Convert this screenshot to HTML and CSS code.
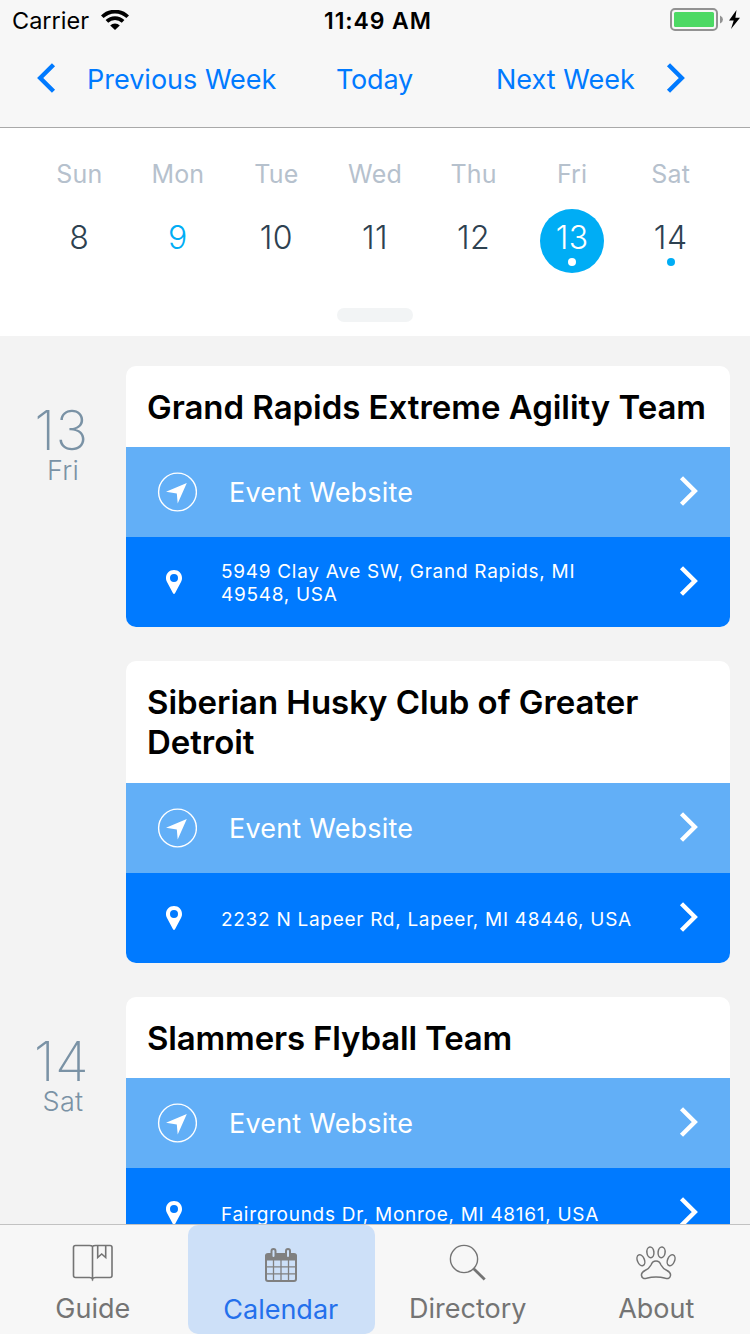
FILE: index.html
```html
<!DOCTYPE html>
<html lang="en">
<head>
<meta charset="utf-8">
<title>Calendar</title>
<link rel="stylesheet" href="styles.css">
</head>
<body>
<svg class="defs" width="0" height="0">
  <symbol id="chev" viewBox="0 0 20 32"><path d="M2.500 2.700 15.800 16 2.500 29.300" fill="none" stroke="currentColor" stroke-width="4.400"/></symbol>
  <symbol id="nav" viewBox="0 0 40 40"><circle cx="20.500" cy="20" r="18.900" fill="none" stroke="#fff" stroke-width="1.400"/><path d="M29.800 11 20.700 31.500 19.800 21.500 9 19.800Z" fill="#fff"/></symbol>
  <symbol id="pin" viewBox="0 0 16 24"><path fill-rule="evenodd" d="M8 0C3.400 0 0 3.500 0 8c0 1.700.4 2.700 1 4l6 11.200q1 1.600 2 0L15 12c.6-1.300 1-2.300 1-4 0-4.500-3.400-8-8-8Zm0 4a4 4 0 1 0 0 8 4 4 0 0 0 0-8Z" fill="#fff"/></symbol>
</svg>
<div class="screen">
  <header class="top">
    <div class="status">
      <span class="carrier">Carrier</span>
      <svg class="wifi" width="28" height="20" viewBox="0 0 28 20"><g fill="none" stroke="#000" stroke-width="3.700"><path d="M1.300 6.800A18 18 0 0 1 26.700 6.800"/><path d="M5.900 11.400A11.500 11.500 0 0 1 22.100 11.400"/></g><path d="M9.200 15.500A6.800 6.800 0 0 1 18.800 15.500L14 20Z"/></svg>
      <span class="time">11:49 AM</span>
      <svg class="battery" width="72" height="24" viewBox="0 0 72 24"><rect x="1" y="1" width="46" height="21" rx="4" fill="none" stroke="#929292" stroke-width="2"/><rect x="4" y="4" width="40" height="15" rx="1.500" fill="#4cd964"/><path d="M50 7.500q3 1.500 3 4t-3 4Z" fill="#929292"/><path d="M66.500 2 59 12.500h4.700L61 21 70 9.800h-4.600Z"/></svg>
    </div>
    <nav class="weeknav">
      <svg class="arrow prev-arrow" width="20" height="32"><use href="#chev"/></svg>
      <span class="prev">Previous Week</span>
      <span class="today">Today</span>
      <span class="next">Next Week</span>
      <svg class="arrow next-arrow" width="20" height="32"><use href="#chev"/></svg>
    </nav>
  </header>
  <section class="week">
    <div class="days">
      <div class="day"><span class="dow">Sun</span><span class="num">8</span></div>
      <div class="day"><span class="dow">Mon</span><span class="num now">9</span></div>
      <div class="day"><span class="dow">Tue</span><span class="num">10</span></div>
      <div class="day"><span class="dow">Wed</span><span class="num">11</span></div>
      <div class="day"><span class="dow">Thu</span><span class="num">12</span></div>
      <div class="day"><span class="dow">Fri</span><span class="num selected">13<i class="dot"></i></span></div>
      <div class="day"><span class="dow">Sat</span><span class="num">14<i class="dot"></i></span></div>
    </div>
    <div class="knob"></div>
  </section>
  <main class="agenda">
    <div class="entry">
      <div class="date"><span class="date-num">13</span><span class="date-dow">Fri</span></div>
      <article class="card">
        <h2 class="title t1">Grand Rapids Extreme Agility Team</h2>
        <div class="row web"><svg class="nav-icon" width="40" height="40"><use href="#nav"/></svg><span class="label">Event Website</span><svg class="go" width="20" height="32"><use href="#chev"/></svg></div>
        <div class="row place"><svg class="pin-icon" width="16" height="24"><use href="#pin"/></svg><span class="address">5949 Clay Ave SW, Grand Rapids, MI<br>49548, USA</span><svg class="go" width="20" height="32"><use href="#chev"/></svg></div>
      </article>
    </div>
    <div class="entry">
      <div class="date"></div>
      <article class="card">
        <h2 class="title t2">Siberian Husky Club of Greater<br>Detroit</h2>
        <div class="row web"><svg class="nav-icon" width="40" height="40"><use href="#nav"/></svg><span class="label">Event Website</span><svg class="go" width="20" height="32"><use href="#chev"/></svg></div>
        <div class="row place"><svg class="pin-icon" width="16" height="24"><use href="#pin"/></svg><span class="address">2232 N Lapeer Rd, Lapeer, MI 48446, USA</span><svg class="go" width="20" height="32"><use href="#chev"/></svg></div>
      </article>
    </div>
    <div class="entry">
      <div class="date"><span class="date-num">14</span><span class="date-dow">Sat</span></div>
      <article class="card">
        <h2 class="title t1 t3">Slammers Flyball Team</h2>
        <div class="row web"><svg class="nav-icon" width="40" height="40"><use href="#nav"/></svg><span class="label">Event Website</span><svg class="go" width="20" height="32"><use href="#chev"/></svg></div>
        <div class="row place"><svg class="pin-icon" width="16" height="24"><use href="#pin"/></svg><span class="address">Fairgrounds Dr, Monroe, MI 48161, USA</span><svg class="go" width="20" height="32"><use href="#chev"/></svg></div>
      </article>
    </div>
  </main>
  <footer class="tabs">
    <div class="tab">
      <svg class="tab-icon" width="42" height="40" viewBox="0 0 42 40" fill="none" stroke="#747474" stroke-width="1.600"><path d="M20.500 4.500Q19.700 3.500 17.500 3.500H3.500Q1.500 3.500 1.500 5.500V33.500Q1.500 35.500 3.500 35.500H17.500Q20 35.500 20.500 37 21 35.500 23.500 35.500H38Q40 35.500 40 33.500V5.500Q40 3.500 38 3.500H23.500Q21.300 3.500 20.500 4.500V38.500"/><path d="M25.700 3.500V15.500L29.700 12 33.700 15.500V3.500"/></svg>
      <span class="tab-label">Guide</span>
    </div>
    <div class="tab active">
      <svg class="tab-icon" width="40" height="40" viewBox="0 0 40 40"><rect x="5" y="13" width="30" height="26" rx="2" fill="none" stroke="#808080" stroke-width="2"/><path d="M4 18.500V14q0-3 3-3h26q3 0 3 3v4.500Z" fill="#808080"/><path d="M5 24.800H35M5 31.800H35M12.500 18V38M20 18V38M27.500 18V38" stroke="#808080" stroke-width="1.300"/><g fill="#cde0f8" stroke="#808080" stroke-width="2"><rect x="10.500" y="7" width="4" height="9" rx="2"/><rect x="25" y="7" width="4" height="9" rx="2"/></g></svg>
      <span class="tab-label">Calendar</span>
    </div>
    <div class="tab">
      <svg class="tab-icon" width="42" height="40" viewBox="0 0 42 40" fill="none" stroke="#747474"><circle cx="17" cy="17" r="13.600" stroke-width="1.400"/><path d="M26.700 26.700 37.700 37.500" stroke-width="2.800"/></svg>
      <span class="tab-label directory">Directory</span>
    </div>
    <div class="tab about">
      <svg class="tab-icon" width="40" height="40" viewBox="0 0 40 40" fill="none" stroke="#747474" stroke-width="1.500"><ellipse cx="14.400" cy="10.300" rx="3.500" ry="5.400" transform="rotate(-6 14.400 10.300)"/><ellipse cx="25.600" cy="10.300" rx="3.500" ry="5.400" transform="rotate(6 25.600 10.300)"/><ellipse cx="4.900" cy="18.200" rx="3.500" ry="5.700" transform="rotate(-22 4.900 18.200)"/><ellipse cx="35.100" cy="18.200" rx="3.500" ry="5.700" transform="rotate(22 35.100 18.200)"/><path d="M20 19.100Q23.500 19.100 25 23 26.700 26.500 31 28.500 35 30.500 34.500 33.500 33.800 37.300 29.500 36.300 20 33.500 10.500 36.300 6.200 37.300 5.500 33.500 5 30.500 9 28.500 13.300 26.500 15 23 16.500 19.100 20 19.100Z"/></svg>
      <span class="tab-label">About</span>
    </div>
  </footer>
</div>
</body>
</html>
```
FILE: styles.css
```css
* { box-sizing: border-box; }
body { margin: 0; font-family: Inter, Roboto, sans-serif; }
svg { display: block; flex: none; }
.defs { position: absolute; }
.screen { width: 750px; height: 1334px; display: flex; flex-direction: column; overflow: hidden; background: #f3f3f3; }

.top { height: 128px; flex: none; background: #f7f7f7; border-bottom: 1px solid #a9a9a9; }
.status { height: 42px; display: flex; align-items: center; padding: 0 8px 1px 12px; font-size: 23.500px; line-height: 40px; white-space: nowrap; }
.carrier { width: 90px; }
.wifi { margin: 0 195px 2px -1px; }
.time { width: 346px; font-size: 23px; font-weight: 600; letter-spacing: 0.900px; }
.battery { margin-bottom: 1px; }
.weeknav { height: 85px; display: grid; grid-template-columns: 51px 249px 160px 170px 1fr; padding-left: 36px; font-size: 27px; line-height: 75px; color: #007aff; white-space: nowrap; }
.arrow { margin-top: 20px; }
.prev-arrow { transform: scaleX(-1); }
.today { letter-spacing: -0.200px; }

.week { height: 208px; flex: none; background: #fff; display: flex; flex-direction: column; align-items: center; }
.days { width: 690px; height: 180px; display: grid; grid-template-columns: repeat(7, 1fr); }
.day { display: flex; flex-direction: column; align-items: center; padding-top: 30px; }
.dow { font-size: 25px; line-height: 32px; color: #b6c1cd; letter-spacing: 0.200px; }
.num { position: relative; width: 64px; height: 64px; margin-top: 19px; border-radius: 50%; text-align: center; font-size: 32px; font-weight: 300; line-height: 57px; letter-spacing: 0.500px; color: #2d4150; }
.now { color: #00adf5; }
.selected { background: #00adf5; color: #fff; }
.dot { position: absolute; left: 28px; top: 49px; width: 8px; height: 8px; border-radius: 50%; background: #00adf5; }
.selected .dot { background: #fff; }
.knob { width: 76px; height: 14px; border-radius: 7px; background: #f2f4f5; }

.agenda { flex: 1; min-height: 0; overflow: hidden; padding: 30px 20px 0 0; display: flex; flex-direction: column; gap: 34px; }
.entry { display: flex; flex: none; }
.date { width: 126px; display: flex; flex-direction: column; align-items: center; padding-top: 36px; color: #7a92a5; }
.date-num { margin-left: -3px; font-size: 55px; font-weight: 200; line-height: 56px; letter-spacing: 0.500px; }
.date-dow { margin-top: 1px; font-size: 27px; font-weight: 300; line-height: 24px; letter-spacing: 0.300px; }
.card { width: 604px; border-radius: 10px; overflow: hidden; background: #fff; }
.title { margin: 0; padding: 21px 0 20px 21px; font-size: 33px; font-weight: 600; line-height: 40px; letter-spacing: -0.040px; color: #000; white-space: nowrap; }
.t2 { padding-bottom: 21px; }
.t3 { letter-spacing: -0.160px; }
.row { height: 90px; display: flex; align-items: center; padding-right: 31px; color: #fff; }
.web { background: #62aff7; padding-left: 31px; }
.place { background: #007aff; padding-left: 40px; }
.label { margin-left: 32px; font-size: 27px; letter-spacing: 0.200px; }
.address { margin-left: 39px; padding-top: 2px; font-size: 19px; line-height: 23px; letter-spacing: 0.710px; white-space: nowrap; }
.go { margin: 0 0 2px auto; }

.tabs { height: 110px; flex: none; background: #f7f7f7; border-top: 1px solid #c2c2c2; display: grid; grid-template-columns: repeat(4, 1fr); }
.tab { display: flex; flex-direction: column; align-items: center; padding: 17px 2px 0 0; color: #747474; }
.active { padding-right: 1px; background: #cde0f8; border-radius: 10px; color: #2470ec; }
.about { padding-right: 0; }
.tab-label { margin-top: 9px; font-size: 27px; line-height: 36px; }
.active .tab-label { line-height: 37px; }
```
